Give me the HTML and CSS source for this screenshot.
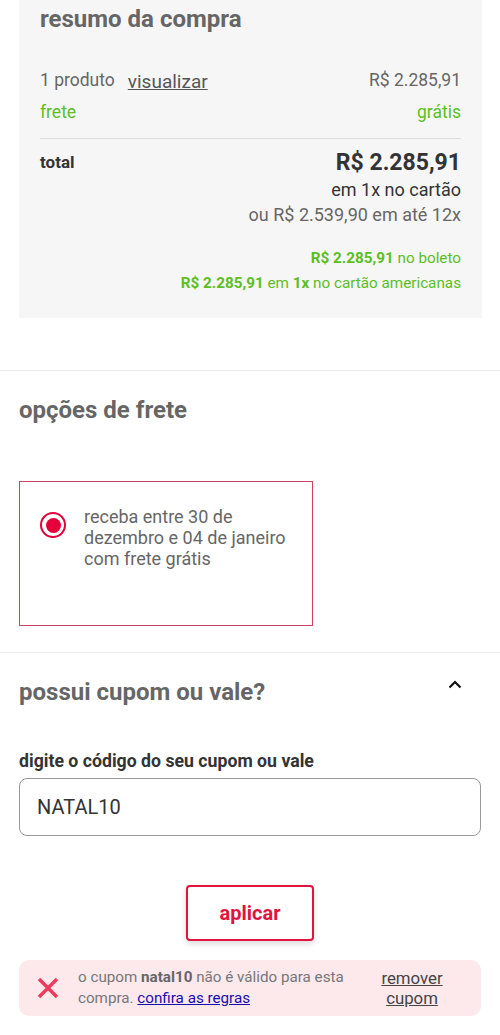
FILE: index.html
```html
<!DOCTYPE html>
<html lang="pt-BR">
<head>
<meta charset="utf-8">
<link rel="stylesheet" href="styles.css">
</head>
<body>
<section class="summary">
  <h2 class="summary-title">resumo da compra</h2>
  <div class="row row-products">
    <span>1 produto<a class="view-link">visualizar</a></span>
    <span>R$ 2.285,91</span>
  </div>
  <div class="row row-freight">
    <span>frete</span>
    <span>grátis</span>
  </div>
  <div class="total">
    <span class="total-label">total</span>
    <div class="total-values">
      <div class="total-price">R$ 2.285,91</div>
      <div class="total-line">em 1x no cartão</div>
      <div class="total-alt">ou R$ 2.539,90 em até 12x</div>
      <div class="green-lines">
        <div><b>R$ 2.285,91</b> no boleto</div>
        <div><b>R$ 2.285,91</b> em <b>1x</b> no cartão americanas</div>
      </div>
    </div>
  </div>
</section>

<section class="section shipping">
  <h2 class="section-title">opções de frete</h2>
  <div class="ship-card">
    <span class="radio"><span class="radio-dot"></span></span>
    <p class="ship-text">receba entre 30 de dezembro e 04 de janeiro com frete grátis</p>
  </div>
</section>

<section class="section coupon">
  <div class="coupon-head">
    <h2 class="section-title">possui cupom ou vale?</h2>
    <svg class="chevron" width="14" height="9" viewBox="0 0 14 9"><path d="M1.5 7.5 L7 2 L12.5 7.5" fill="none" stroke="#111" stroke-width="2.2"/></svg>
  </div>
  <label class="coupon-label">digite o código do seu cupom ou vale</label>
  <div class="coupon-input">NATAL10</div>
  <div class="btn-wrap"><button class="apply-btn">aplicar</button></div>
  <div class="error-box">
    <svg class="error-x" width="24" height="24" viewBox="0 0 24 24"><path d="M3 3 L21 21 M21 3 L3 21" stroke="#ee3a5a" stroke-width="3.4" stroke-linecap="butt"/></svg>
    <p class="error-text">o cupom <b>natal10</b> não é válido para esta compra. <a class="rules-link">confira as regras</a></p>
    <a class="remove-link">remover cupom</a>
  </div>
</section>
</body>
</html>
```
FILE: styles.css
```css
* { box-sizing: border-box; }
html, body { margin: 0; padding: 0; }
body {
  width: 500px;
  background: #fff;
  font-family: Roboto, "Noto Sans", Arial, sans-serif;
  color: #666;
}
h2, p { margin: 0; }

.summary {
  margin: 0 18px 0 19px;
  background: #f6f6f6;
  padding: 4px 21px 22px 21px;
}
.summary-title {
  font-size: 24px;
  font-weight: 700;
  color: #666;
  line-height: 30px;
}
.row {
  display: flex;
  justify-content: space-between;
  font-size: 17.5px;
  line-height: 22px;
}
.row-products { margin-top: 35px; color: #666; }
.view-link {
  color: #555;
  text-decoration: underline;
  margin-left: 13px;
  position: relative;
  top: 2px;
  font-size: 19px;
}
.row-freight { margin-top: 10px; color: #5bbf1f; }
.total {
  margin-top: 15px;
  border-top: 1px solid #dcdcdc;
  padding-top: 10px;
  display: flex;
  justify-content: space-between;
}
.total-label {
  margin-top: 3px;
  font-size: 17px;
  font-weight: 700;
  color: #333;
  line-height: 20px;
}
.total-values { text-align: right; }
.total-price {
  font-size: 23px;
  font-weight: 700;
  color: #333;
  line-height: 28px;
}
.total-line { font-size: 18px; color: #333; line-height: 25px; }
.total-alt { font-size: 18px; color: #666; line-height: 25px; }
.green-lines {
  margin-top: 19px;
  font-size: 15.25px;
  color: #5bbf1f;
  line-height: 25px;
}
.green-lines b { font-weight: 700; }

.section { border-top: 1px solid #ececec; }
.shipping { margin-top: 52px; padding: 24px 19px 26px 19px; }
.section-title {
  font-size: 24px;
  font-weight: 700;
  color: #666;
  line-height: 30px;
}
.ship-card {
  margin-top: 56px;
  width: 294px;
  height: 145px;
  border: 1px solid #d0415f;
  display: flex;
  align-items: flex-start;
  padding: 24px 20px 0 20px;
  gap: 18px;
}
.radio {
  flex: none;
  width: 26px;
  height: 26px;
  border-radius: 50%;
  border: 2.5px solid #e60039;
  display: flex;
  align-items: center;
  justify-content: center;
  margin-top: 6px;
}
.radio-dot {
  width: 15px;
  height: 15px;
  border-radius: 50%;
  background: #e60039;
}
.ship-text {
  font-size: 18px;
  line-height: 21px;
  color: #666;
}

.coupon { padding: 24px 19px 20px 19px; }
.coupon-head {
  display: flex;
  justify-content: space-between;
  align-items: flex-start;
}
.chevron { margin: 3px 19px 0 0; }
.coupon-label {
  display: block;
  margin-top: 44px;
  font-size: 17.7px;
  font-weight: 700;
  color: #333;
  line-height: 20px;
}
.coupon-input {
  margin-top: 7px;
  height: 58px;
  border: 1px solid #999;
  border-radius: 8px;
  padding: 0 17px;
  display: flex;
  align-items: center;
  font-size: 20px;
  color: #333;
}
.btn-wrap {
  display: flex;
  justify-content: center;
  margin-top: 49px;
}
.apply-btn {
  width: 128px;
  height: 56px;
  border: 2px solid #e0143f;
  border-radius: 4px;
  background: #fff;
  color: #e0143f;
  font-family: inherit;
  font-size: 20px;
  font-weight: 700;
  box-shadow: 0 3px 6px rgba(0,0,0,0.14);
}
.error-box {
  margin-top: 19px;
  background: #fde8ec;
  border-radius: 10px;
  height: 56px;
  display: flex;
  align-items: center;
  padding: 0 34px 0 17px;
}
.error-x { flex: none; }
.error-text {
  margin-left: 18px;
  width: 272px;
  font-size: 15.2px;
  line-height: 21.5px;
  color: #777;
}
.error-text b { color: #666; }
.rules-link { color: #1a0dab; text-decoration: underline; }
.remove-link {
  margin-left: auto;
  width: 70px;
  text-align: center;
  font-size: 16.8px;
  line-height: 20px;
  color: #444;
  text-decoration: underline;
}
```
